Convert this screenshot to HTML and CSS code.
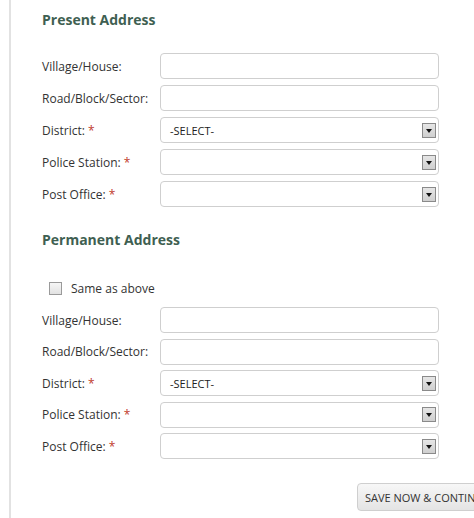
FILE: index.html
```html
<!DOCTYPE html>
<html>
<head>
<meta charset="utf-8">
<link rel="stylesheet" href="styles.css">
</head>
<body>
<div class="page">
  <section class="section">
    <h2 class="heading">Present Address</h2>
    <div class="rows">
      <div class="row"><label class="label">Village/House:</label><div class="field"></div></div>
      <div class="row"><label class="label">Road/Block/Sector:</label><div class="field"></div></div>
      <div class="row"><label class="label">District: <span class="req">*</span></label><div class="field select"><span class="value">-SELECT-</span><span class="arrow"></span></div></div>
      <div class="row"><label class="label">Police Station: <span class="req">*</span></label><div class="field select"><span class="value"></span><span class="arrow"></span></div></div>
      <div class="row"><label class="label">Post Office: <span class="req">*</span></label><div class="field select"><span class="value"></span><span class="arrow"></span></div></div>
    </div>
  </section>
  <section class="section perm">
    <h2 class="heading">Permanent Address</h2>
    <div class="check"><span class="box"></span><span>Same as above</span></div>
    <div class="rows">
      <div class="row"><label class="label">Village/House:</label><div class="field"></div></div>
      <div class="row"><label class="label">Road/Block/Sector:</label><div class="field"></div></div>
      <div class="row"><label class="label">District: <span class="req">*</span></label><div class="field select"><span class="value">-SELECT-</span><span class="arrow"></span></div></div>
      <div class="row"><label class="label">Police Station: <span class="req">*</span></label><div class="field select"><span class="value"></span><span class="arrow"></span></div></div>
      <div class="row"><label class="label">Post Office: <span class="req">*</span></label><div class="field select"><span class="value"></span><span class="arrow"></span></div></div>
    </div>
  </section>
  <div class="actions"><button class="btn">SAVE NOW &amp; CONTINUE</button></div>
</div>
</body>
</html>
```
FILE: styles.css
```css
html, body { margin: 0; padding: 0; background: #fff; }
body { font-family: "Open Sans", "Liberation Sans", sans-serif; color: #333; overflow: hidden; }
.page {
  margin-left: 9px;
  border-left: 2px solid #e2e2e2;
  height: 518px;
  padding-left: 31px;
  box-sizing: border-box;
}
.section { padding-top: 10px; }
.heading {
  margin: 0;
  font-size: 14px;
  font-weight: 700;
  color: #3f5f52;
  line-height: 20px;
}
.rows { display: flex; flex-direction: column; gap: 6px; margin-top: 23px; }
.row { display: flex; align-items: center; height: 26px; }
.label { width: 118px; font-size: 12px; color: #333; }
.req { color: #c0392b; }
.field {
  width: 279px; height: 26px; box-sizing: border-box;
  border: 1px solid #cfcfcf; border-radius: 4px; background: #fff;
  display: flex; align-items: center;
}
.select { padding: 0 2px 0 9px; }
.value { flex: 1; font-size: 11px; color: #222; }
.arrow {
  width: 14px; height: 15px; box-sizing: border-box;
  border: 1px solid #8a8a8a; background: linear-gradient(#e6e6e6, #cfcfcf);
  position: relative;
}
.arrow::after {
  content: ""; position: absolute; left: 3px; top: 5px;
  border-left: 3.5px solid transparent; border-right: 3.5px solid transparent;
  border-top: 4px solid #111;
}
.perm { padding-top: 23px; }
.check { display: flex; align-items: center; gap: 9px; margin: 30px 0 0 7px; font-size: 12px; }
.box {
  width: 13px; height: 13px; box-sizing: border-box;
  border: 1px solid #9a9a9a; background: linear-gradient(#f6f6f6, #e2e2e2);
}
.perm .rows { margin-top: 10px; gap: 5.5px; }
.actions { margin-top: 24px; padding-left: 315px; }
.btn {
  font-family: "Open Sans", "Liberation Sans", sans-serif;
  font-size: 11px; color: #333; white-space: nowrap;
  height: 28px; padding: 0 7px; border: 1px solid #cfcfcf; border-radius: 4px;
  background: linear-gradient(#f7f7f7, #e4e4e4);
}
```
